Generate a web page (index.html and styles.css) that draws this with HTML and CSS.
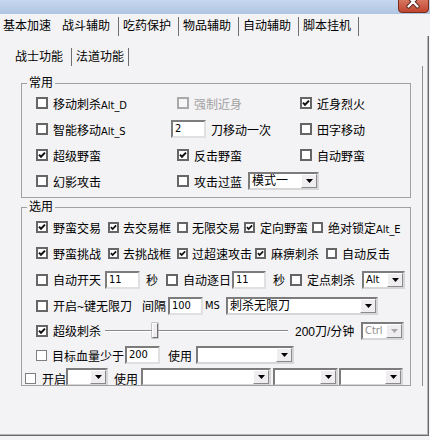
FILE: index.html
```html
<!DOCTYPE html>
<html lang="zh-CN">
<head>
<meta charset="utf-8">
<link rel="stylesheet" href="styles.css">
</head>
<body>
<div class="titlebar">
  <svg class="close" width="31" height="13" viewBox="0 0 31 13">
    <defs><linearGradient id="cg" x1="0" y1="0" x2="0" y2="1"><stop offset="0" stop-color="#e08a76"/><stop offset="1" stop-color="#c0432c"/></linearGradient></defs>
    <rect x="0.5" y="-5" width="30" height="17.5" rx="3.5" fill="url(#cg)" stroke="#7a2c1e"/>
    <path d="M10.5 -3 L19.5 6.5 M19.5 -3 L10.5 6.5" stroke="#5b2a22" stroke-width="4.2" stroke-linecap="round"/>
    <path d="M10.5 -3 L19.5 6.5 M19.5 -3 L10.5 6.5" stroke="#ffffff" stroke-width="2.2" stroke-linecap="round"/>
  </svg>
</div>
<div class="tabs">
  <div class="tab first">基本加速</div>
  <div class="tab active">战斗辅助</div>
  <div class="tab">吃药保护</div>
  <div class="tab">物品辅助</div>
  <div class="tab">自动辅助</div>
  <div class="tab">脚本挂机</div>
</div>
<div class="frame">
  <div class="subtabs">
    <div class="subtab active">战士功能</div>
    <div class="subtab">法道功能</div>
  </div>
  <div class="page">
    <fieldset class="group g1">
      <legend>常用</legend>
      <div class="grid1">
        <label class="cbl"><span class="cb"></span><span>移动刺杀<span class="lat">Alt_D</span></span></label>
        <label class="cbl disabled"><span class="cb"></span>强制近身</label>
        <label class="cbl"><span class="cb on"><svg viewBox="0 0 8 8"><path d="M1 3.6 L3 5.8 L7 1.6" /></svg></span>近身烈火</label>

        <label class="cbl"><span class="cb"></span><span>智能移动<span class="lat">Alt_S</span></span></label>
        <div class="cell"><span class="in w35 pull">2</span><span class="txt ml5">刀移动一次</span></div>
        <label class="cbl"><span class="cb"></span>田字移动</label>

        <label class="cbl"><span class="cb on"><svg viewBox="0 0 8 8"><path d="M1 3.6 L3 5.8 L7 1.6" /></svg></span>超级野蛮</label>
        <label class="cbl"><span class="cb on"><svg viewBox="0 0 8 8"><path d="M1 3.6 L3 5.8 L7 1.6" /></svg></span>反击野蛮</label>
        <label class="cbl"><span class="cb"></span>自动野蛮</label>

        <label class="cbl"><span class="cb"></span>幻影攻击</label>
        <div class="cell"><label class="cbl"><span class="cb"></span>攻击过蓝</label><div class="select w71 ml6"><span class="val">模式一</span><span class="btn"><svg width="7" height="4" viewBox="0 0 7 4"><polygon points="0,0 7,0 3.5,4"/></svg></span></div></div>
        <div></div>
      </div>
    </fieldset>

    <fieldset class="group g2">
      <legend>选用</legend>
      <div class="rows2">
        <div class="row r1">
          <label class="cbl"><span class="cb on"><svg viewBox="0 0 8 8"><path d="M1 3.6 L3 5.8 L7 1.6" /></svg></span>野蛮交易</label>
          <label class="cbl g4"><span class="cb sm on"><svg viewBox="0 0 8 8"><path d="M1 3.6 L3 5.8 L7 1.6" /></svg></span>去交易框</label>
          <label class="cbl g4"><span class="cb sm"></span>无限交易</label>
          <label class="cbl"><span class="cb sm on"><svg viewBox="0 0 8 8"><path d="M1 3.6 L3 5.8 L7 1.6" /></svg></span>定向野蛮</label>
          <label class="cbl"><span class="cb sm"></span><span>绝对锁定<span class="lat">Alt_E</span></span></label>
        </div>
        <div class="row r2">
          <label class="cbl"><span class="cb on"><svg viewBox="0 0 8 8"><path d="M1 3.6 L3 5.8 L7 1.6" /></svg></span>野蛮挑战</label>
          <label class="cbl g4"><span class="cb sm on"><svg viewBox="0 0 8 8"><path d="M1 3.6 L3 5.8 L7 1.6" /></svg></span>去挑战框</label>
          <label class="cbl g4"><span class="cb sm on"><svg viewBox="0 0 8 8"><path d="M1 3.6 L3 5.8 L7 1.6" /></svg></span>过超速攻击</label>
          <label class="cbl"><span class="cb sm on"><svg viewBox="0 0 8 8"><path d="M1 3.6 L3 5.8 L7 1.6" /></svg></span>麻痹刺杀</label>
          <label class="cbl"><span class="cb sm"></span>自动反击</label>
        </div>
        <div class="row r3">
          <label class="cbl"><span class="cb"></span>自动开天</label>
          <span class="in w35">11</span>
          <span class="txt">秒</span>
          <label class="cbl"><span class="cb"></span>自动逐日</label>
          <span class="in w34">11</span>
          <span class="txt">秒</span>
          <label class="cbl"><span class="cb"></span>定点刺杀</label>
          <div class="select w43"><span class="val lat">Alt</span><span class="btn"><svg width="7" height="4" viewBox="0 0 7 4"><polygon points="0,0 7,0 3.5,4"/></svg></span></div>
        </div>
        <div class="row r4">
          <label class="cbl"><span class="cb"></span>开启~键无限刀</label>
          <span class="txt">间隔</span>
          <span class="in w35">100</span>
          <span class="txt lat">MS</span>
          <div class="select w152"><span class="val">刺杀无限刀</span><span class="btn"><svg width="7" height="4" viewBox="0 0 7 4"><polygon points="0,0 7,0 3.5,4"/></svg></span></div>
        </div>
        <div class="row r5">
          <label class="cbl"><span class="cb on"><svg viewBox="0 0 8 8"><path d="M1 3.6 L3 5.8 L7 1.6" /></svg></span>超级刺杀</label>
          <div class="slider"><span class="thumb"></span></div>
          <span class="txt">200刀/分钟</span>
          <div class="select w43 dis"><span class="val lat">Ctrl</span><span class="btn"><svg width="7" height="4" viewBox="0 0 7 4"><polygon points="0,0 7,0 3.5,4"/></svg></span></div>
        </div>
        <div class="row r6">
          <label class="cbl"><span class="cb flat"></span>目标血量少于</label>
          <span class="in w35">200</span>
          <span class="txt">使用</span>
          <div class="select w98"><span class="val"></span><span class="btn"><svg width="7" height="4" viewBox="0 0 7 4"><polygon points="0,0 7,0 3.5,4"/></svg></span></div>
        </div>
        <div class="row r7">
          <span class="cb flat"></span>
          <span class="txt">开启</span>
          <div class="select w42"><span class="val"></span><span class="btn"><svg width="7" height="4" viewBox="0 0 7 4"><polygon points="0,0 7,0 3.5,4"/></svg></span></div>
          <span class="txt">使用</span>
          <div class="select w130"><span class="val"></span><span class="btn"><svg width="7" height="4" viewBox="0 0 7 4"><polygon points="0,0 7,0 3.5,4"/></svg></span></div>
          <div class="select w65"><span class="val"></span><span class="btn"><svg width="7" height="4" viewBox="0 0 7 4"><polygon points="0,0 7,0 3.5,4"/></svg></span></div>
          <div class="select w64"><span class="val"></span><span class="btn"><svg width="7" height="4" viewBox="0 0 7 4"><polygon points="0,0 7,0 3.5,4"/></svg></span></div>
        </div>
      </div>
    </fieldset>
  </div>
</div>
</body>
</html>
```

FILE: styles.css
```css
* { box-sizing: border-box; }
html, body { margin: 0; padding: 0; }
body {
  width: 430px;
  height: 440px;
  overflow: hidden;
  background: #f3f2f4;
  font-family: "Liberation Sans", "Noto Sans CJK SC", sans-serif;
  font-size: 12px;
  font-weight: 400;
  color: #000;
}

/* title strip */
.titlebar {
  height: 14px;
  background: linear-gradient(#c6d8ef, #afc5e2);
  display: flex;
  justify-content: flex-end;
}
.close { display: block; margin-right: 1px; }

/* top tabs */
.tabs { display: flex; height: 22px; padding-top: 3px; }
.tab {
  width: 60px;
  height: 19px;
  line-height: 19px;
  padding-left: 4px;
  border-right: 1px solid #6e6e6e;
  white-space: nowrap;
}
.tab.first { width: 57px; padding-left: 3px; border-right: none; }
.tab.active { width: 62px; padding-left: 5px; }

/* outer frame */
.frame {
  width: 429px;
  height: 400px;
  border-right: 1px solid #6a6a6a;
  border-bottom: 1px solid #6a6a6a;
  box-shadow: inset -1px -1px 0 #b4b4b4;
  padding-top: 12px;
}

.subtabs { display: flex; margin-left: 10px; height: 18px; }
.subtab {
  height: 18px;
  line-height: 18px;
  border-right: 1px solid #6e6e6e;
  white-space: nowrap;
  padding-left: 4px;
  width: 57px;
}
.subtab.active { width: 62px; padding-left: 5px; }

.page {
  margin-left: 8px;
  width: 415px;
  height: 320px;
  border-right: 1px solid #8c8c8c;
  padding: 10px 0 0 13px;
}

/* group boxes */
.group {
  margin: 0;
  padding: 0;
  width: 390px;
  min-width: 0;
  border: 1px solid #a0a0a0;
  overflow: hidden;
}
.group legend {
  margin-left: 5px;
  padding: 0 2px;
  height: 14px;
  line-height: 14px;
}
.g1 { height: 122px; }
.g2 { height: 186px; margin-top: 2px; }

.grid1 {
  display: grid;
  grid-template-columns: 141px 123px auto;
  grid-auto-rows: 26px;
  align-items: center;
  padding-left: 14px;
}
.cell { display: flex; align-items: center; white-space: nowrap; }

.cbl {
  display: flex;
  align-items: center;
  gap: 5px;
  white-space: nowrap;
}
.cbl.g4 { gap: 4px; }
.txt { white-space: nowrap; }
.lat { font-family: "DejaVu Sans Condensed", "Liberation Sans", sans-serif; font-size: 11px; }
.ml5 { margin-left: 5px; }
.ml6 { margin-left: 6px; }
.pull { margin-left: -6px; }

/* checkbox */
.cb {
  flex: none;
  width: 12px;
  height: 12px;
  border: 2px solid #666;
  background: #fff;
  display: flex;
  align-items: center;
  justify-content: center;
}
.cb.sm { width: 11px; height: 11px; }
.cb.flat { width: 11px; height: 11px; border: 1px solid #7e7e7e; }
.cb svg { width: 8px; height: 8px; display: block; }
.cb.sm svg { width: 7px; height: 7px; }
.cb svg path { fill: none; stroke: #111; stroke-width: 2; }
.disabled { color: #a3a3a3; }
.disabled .cb { border-color: #a9a9a9; background: #f6f6f6; }

/* text input */
.in {
  display: block;
  height: 18px;
  border: 2px solid;
  border-color: #7c7c7c #e0e0e0 #e0e0e0 #7c7c7c;
  background: #fff;
  padding-left: 2px;
  line-height: 14px;
  font-family: "DejaVu Sans Condensed", "Liberation Sans", sans-serif;
  font-size: 11px;
  white-space: nowrap;
}
.w34 { width: 34px; }
.w35 { width: 35px; }

/* combo box */
.select {
  display: flex;
  height: 18px;
  border: 2px solid;
  border-color: #7c7c7c #d6d6d6 #d6d6d6 #7c7c7c;
  background: #fff;
  flex: none;
}
.select .val { flex: 1; padding-left: 2px; line-height: 14px; white-space: nowrap; overflow: hidden; }
.select .btn {
  flex: none;
  width: 16px;
  background: #efedef;
  border: 1px solid;
  border-color: #fff #8a8a8a #8a8a8a #fff;
  display: flex;
  align-items: center;
  justify-content: center;
}
.select .btn svg { display: block; fill: #000; }
.select.dis .val { color: #8e8e8e; }
.select.dis .btn svg { fill: #a8a8a8; }
.w42 { width: 42px; }
.w43 { width: 43px; }
.w64 { width: 64px; }
.w65 { width: 65px; }
.w71 { width: 71px; }
.w98 { width: 98px; }
.w130 { width: 130px; }
.w152 { width: 152px; }

/* rows of the second group */
.rows2 { padding-left: 14px; }
.row { display: grid; align-items: center; }
.r1 { height: 26px; grid-template-columns: 72px 69px 67px 68px auto; }
.r2 { height: 26px; grid-template-columns: 72px 69px 78px 71px auto; }
.r3 { height: 27px; grid-template-columns: 69px 41px 20px 66px 41px 17px 72px auto; }
.r4 { height: 25px; grid-template-columns: 106px 26px 37px 21px auto; }
.r5 { height: 25px; grid-template-columns: 69px 190px 66px auto; }
.r6 { height: 24px; grid-template-columns: 89px 43px 28px auto; }
.r7 { height: 18px; margin-top: 1px; margin-left: -11px; align-items: start;
      grid-template-columns: 17px 24px 48px 27px 132px 66px auto; }
.r7 .cb { margin-top: 5px; }
.r7 .txt { line-height: 18px; margin-top: 3px; }

/* slider */
.slider {
  width: 183px;
  height: 15px;
  display: flex;
  align-items: center;
  background:
    linear-gradient(#8a8a8a, #8a8a8a) 0 7px / 100% 1px no-repeat,
    linear-gradient(#ffffff, #ffffff) 0 8px / 100% 1px no-repeat;
}
.thumb {
  margin-left: 47px;
  width: 6px;
  height: 15px;
  background: #efedef;
  border: 1px solid;
  border-color: #fff #6f6f6f #6f6f6f #fff;
  box-shadow: 0 0 0 0.5px #9a9a9a;
}
```
